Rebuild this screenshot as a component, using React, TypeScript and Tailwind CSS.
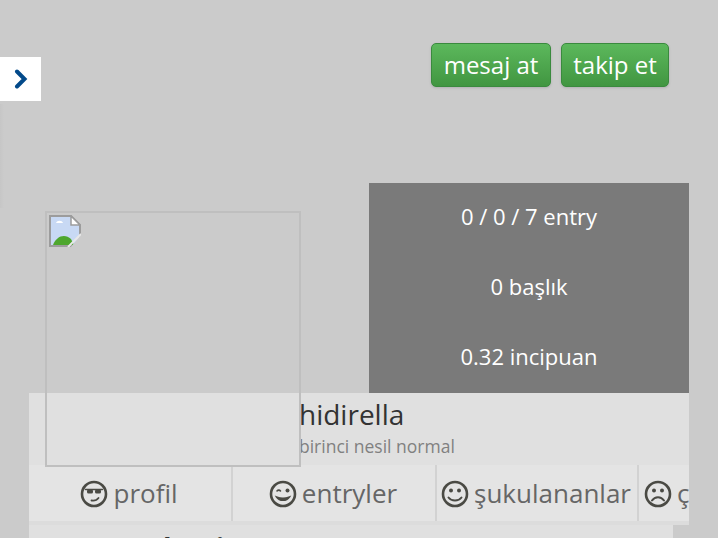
function Face({ kind }: { kind: 'cool' | 'wink' | 'smile' | 'sad' }) {
  return (
    <svg viewBox="0 0 28 28" className="mt-[2px] h-[28px] w-[28px] shrink-0" fill="none" stroke="#4a4a44" strokeWidth="2.6" strokeLinecap="round">
      <circle cx="14" cy="14" r="12" />
      {kind === 'cool' && (
        <>
          <path d="M5.500 9.500h17" strokeWidth="1.400" />
          <rect x="7" y="9.500" width="6" height="4" rx="1.600" fill="#4a4a44" stroke="none" />
          <rect x="15" y="9.500" width="6" height="4" rx="1.600" fill="#4a4a44" stroke="none" />
          <path d="M11.500 20.500c3 .5 5.500-.5 7-2.500" strokeWidth="1.800" />
        </>
      )}
      {kind === 'wink' && (
        <>
          <path d="M8 11c1-1.200 2.500-1.200 3.500 0" strokeWidth="1.600" />
          <circle cx="18.500" cy="10.500" r="2" fill="#4a4a44" stroke="none" />
          <path d="M7.500 17c3 4.500 10 4.500 13 0c-4 1.500-9 1.500-13 0z" fill="#4a4a44" strokeWidth="1.400" />
        </>
      )}
      {kind === 'smile' && (
        <>
          <circle cx="10" cy="10.500" r="2" fill="#4a4a44" stroke="none" />
          <circle cx="18" cy="10.500" r="2" fill="#4a4a44" stroke="none" />
          <path d="M7.500 17.500c3 4 10 4 13 0" strokeWidth="2" />
        </>
      )}
      {kind === 'sad' && (
        <>
          <circle cx="10" cy="10.500" r="2" fill="#4a4a44" stroke="none" />
          <circle cx="18" cy="10.500" r="2" fill="#4a4a44" stroke="none" />
          <path d="M8 20.500c3-4.500 9-4.500 12 0" strokeWidth="2" />
        </>
      )}
    </svg>
  );
}

const tabs = [
  { label: 'profil', kind: 'cool' as const, width: 'w-[204px]' },
  { label: 'entryler', kind: 'wink' as const, width: 'w-[204px]' },
  { label: 'şukulananlar', kind: 'smile' as const, width: 'w-[202px]' },
  { label: 'çukulananlar', kind: 'sad' as const, width: 'w-[204px]' },
];

const buttons = [
  { label: 'mesaj at', width: 'w-[120px]' },
  { label: 'takip et', width: 'w-[108px]' },
];

const stats = ['0 / 0 / 7 entry', '0 başlık', '0.32 incipuan'];

export default function App() {
  return (
    <div className="relative h-[538px] w-[718px] overflow-hidden bg-[#cbcbcb] font-['Open_Sans',sans-serif]">
      {/* sidebar toggle */}
      <div className="absolute left-0 top-[57px] flex h-[44px] w-[41px] items-center justify-center bg-white">
        <svg viewBox="0 0 14 20" className="h-[20px] w-[14px]" fill="none" stroke="#034a8a" strokeWidth="4" strokeLinecap="round" strokeLinejoin="miter">
          <path d="M3 2.500l7.500 7.500L3 17.500" />
        </svg>
      </div>
      <div className="absolute left-0 top-[104px] h-[104px] w-[4px] bg-gradient-to-r from-[#c6c6c6] to-[#cbcbcb]" />

      <div className="flex justify-end gap-[10px] pr-[49px] pt-[43px]">
        {buttons.map((b) => (
          <button key={b.label} className={`${b.width} h-[44px] rounded-[5px] border border-[#3a8a3e] bg-gradient-to-b from-[#5cb85c] to-[#419641] text-[24px] text-white shadow-sm`}>
            {b.label}
          </button>
        ))}
      </div>

      {/* stats */}
      <div className="ml-[369px] mt-[96px] flex h-[210px] w-[320px] flex-col items-center bg-[#7a7a7a] text-[22px] text-white">
        {stats.map((s) => (
          <div key={s} className="flex h-[70px] items-center pb-[4px]">{s}</div>
        ))}
      </div>

      {/* profile head */}
      <div className="ml-[29px] w-[660px] overflow-hidden">
        <div className="h-[72px] bg-[#e0e0e0] pl-[270px]">
          <div className="pt-[2px] text-[28px] leading-[38px] text-[#333333]">hidirella</div>
          <div className="pt-[1px] text-[17.500px] leading-[24px] text-[#808080]">birinci nesil normal</div>
        </div>
        <div className="flex h-[60px] w-[900px] border-b-[4px] border-[#dcdcdc] bg-[#e4e4e4]">
          {tabs.map((t) => (
            <div key={t.label} className={`${t.width} flex items-center justify-center gap-[5px] border-r-2 border-[#d2d2d2] pr-[2px] text-[26px] text-[#666666]`}>
              <Face kind={t.kind} />
              <span>{t.label}</span>
            </div>
          ))}
        </div>
      </div>

      <div className="ml-[29px] h-[20px] w-[644px] overflow-hidden bg-[#e0e0e0] pl-[134px] pt-[4px] text-[28px] font-bold leading-[38px] text-[#333333]">
        benim
      </div>

      {/* avatar, image failed to load */}
      <div className="absolute left-[45px] top-[211px] h-[256px] w-[256px] border-2 border-[#bfbfbf]">
        <svg viewBox="0 0 32 32" className="ml-[2px] mt-[2px] h-[32px] w-[32px]">
          <path d="M1 1h21l9 9v21H1z" fill="#c8d9f4" stroke="#9c9c9c" strokeWidth="2" />
          <path d="M22 1v9h9z" fill="#ffffff" stroke="#9c9c9c" strokeWidth="1.500" />
          <path d="M7 8c1-3 6-3 7 0z" fill="#ffffff" />
          <path d="M4 30c3-9 12-12 18-6l3 6z" fill="#4ea72e" />
          <path d="M21 33l11-13v13z" fill="#cbcbcb" />
          <path d="M19 32l13-13" stroke="#e8e8e8" strokeWidth="2" />
        </svg>
      </div>
    </div>
  );
}
